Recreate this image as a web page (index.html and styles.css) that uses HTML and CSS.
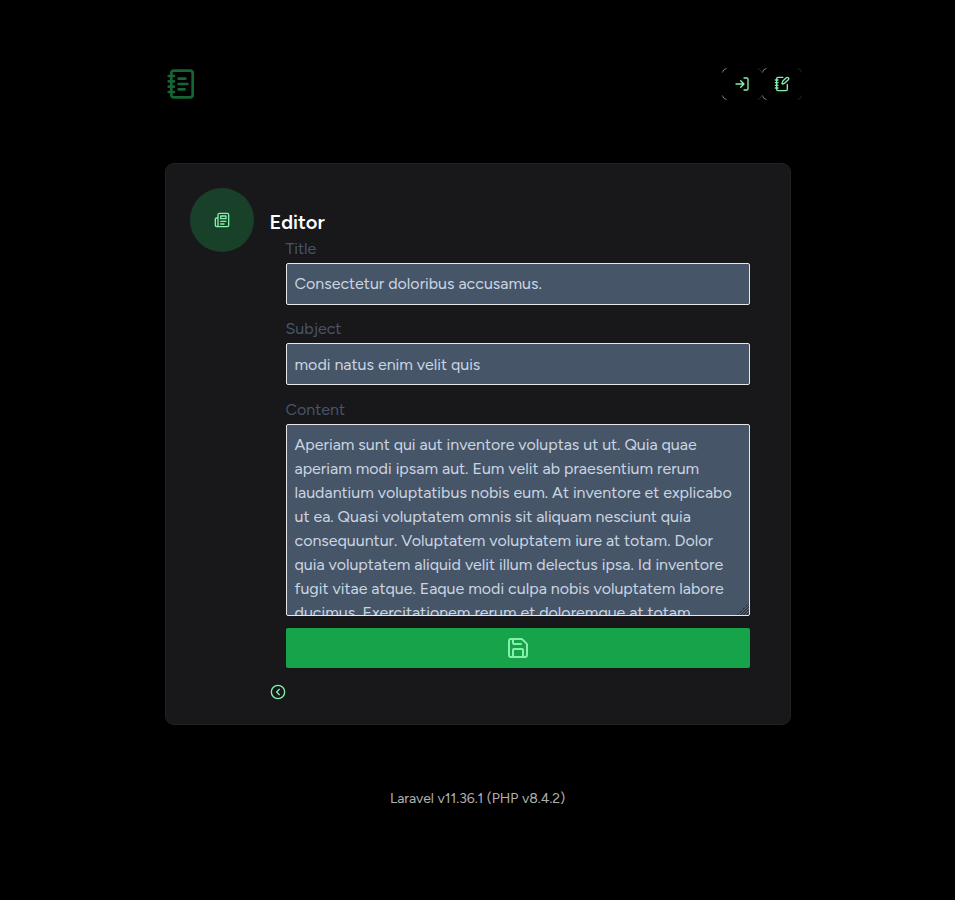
FILE: index.html
```html
<!DOCTYPE html>
<html lang="en">
<head>
<meta charset="utf-8">
<title>Editor</title>
<link rel="stylesheet" href="styles.css">
</head>
<body>
<div class="page">
  <header class="header">
    <svg class="logo icon" viewBox="0 0 24 24"><path d="M2 6h4M2 10h4M2 14h4M2 18h4"/><rect width="16" height="20" x="4" y="2" rx="2"/><path d="M9.5 8h5M9.5 12H16M9.5 16H14"/></svg>
    <nav class="nav">
      <a class="nav-link">
        <svg class="corners" viewBox="0 0 40 32"><path d="M.5 4.5Q1 1 4.5.5M.5 27.5Q1 31 4.5 31.5"/><path class="dim" d="M35.5.5Q39 1 39.5 4.5M35.5 31.5Q39 31 39.5 27.5"/></svg>
        <svg class="icon small" viewBox="0 0 24 24"><path d="M15 3h4a2 2 0 0 1 2 2v14a2 2 0 0 1-2 2h-4"/><path d="m10 17 5-5-5-5M15 12H3"/></svg>
      </a>
      <a class="nav-link">
        <svg class="corners" viewBox="0 0 40 32"><path d="M.5 4.5Q1 1 4.5.5M.5 27.5Q1 31 4.5 31.5"/><path class="dim" d="M35.5.5Q39 1 39.5 4.5M35.5 31.5Q39 31 39.5 27.5"/></svg>
        <svg class="icon small" viewBox="0 0 24 24"><path d="M13.4 2H6a2 2 0 0 0-2 2v16a2 2 0 0 0 2 2h12a2 2 0 0 0 2-2v-7.4M2 6h4M2 10h4M2 14h4M2 18h4"/><path d="M21.378 5.626a1 1 0 1 0-3.004-3.004l-5.01 5.012a2 2 0 0 0-.506.854l-.837 2.87a.5.5 0 0 0 .62.62l2.87-.837a2 2 0 0 0 .854-.506z"/></svg>
      </a>
    </nav>
  </header>
  <main class="card">
    <div class="badge">
      <svg class="icon small" viewBox="0 0 24 24"><path d="M4 22h16a2 2 0 0 0 2-2V4a2 2 0 0 0-2-2H8a2 2 0 0 0-2 2v16a2 2 0 0 1-2 2Zm0 0a2 2 0 0 1-2-2v-9c0-1.100.9-2 2-2h2"/><path d="M18 14h-8M15 18h-5M10 6h8v4h-8V6Z"/></svg>
    </div>
    <div class="body">
      <h2 class="title">Editor</h2>
      <form class="form">
        <label class="label" for="title">Title</label>
        <input class="field field-title" id="title" value="Consectetur doloribus accusamus.">
        <label class="label" for="subject">Subject</label>
        <input class="field field-subject" id="subject" value="modi natus enim velit quis">
        <label class="label" for="content">Content</label>
        <textarea class="field area" id="content">Aperiam sunt qui aut inventore voluptas ut ut. Quia quae
aperiam modi ipsam aut. Eum velit ab praesentium rerum
laudantium voluptatibus nobis eum. At inventore et explicabo
ut ea. Quasi voluptatem omnis sit aliquam nesciunt quia
consequuntur. Voluptatem voluptatem iure at totam. Dolor
quia voluptatem aliquid velit illum delectus ipsa. Id inventore
fugit vitae atque. Eaque modi culpa nobis voluptatem labore
ducimus. Exercitationem rerum et doloremque at totam.</textarea>
        <button class="save" type="button" aria-label="Save"><svg class="icon" viewBox="0 0 24 24"><path d="M15.2 3a2 2 0 0 1 1.400.6l3.800 3.800a2 2 0 0 1 .6 1.400V19a2 2 0 0 1-2 2H5a2 2 0 0 1-2-2V5a2 2 0 0 1 2-2z"/><path d="M17 21v-7a1 1 0 0 0-1-1H8a1 1 0 0 0-1 1v7M7 3v4a1 1 0 0 0 1 1h7"/></svg></button>
      </form>
      <a class="back"><svg class="icon small" viewBox="0 0 24 24"><circle cx="12" cy="12" r="10"/><path d="m14 16-4-4 4-4"/></svg></a>
    </div>
  </main>
  <footer class="footer">Laravel v11.36.1 (PHP v8.4.2)</footer>
</div>
</body>
</html>
```
FILE: styles.css
```css
* { box-sizing: border-box; }
body { margin: 0; background: #000; font: 16px/24px Figtree, Lato, sans-serif; -webkit-font-smoothing: antialiased; }
.page { width: 626px; margin: 0 auto; height: 900px; }
.icon { display: block; width: 24px; height: 24px; fill: none; stroke: currentColor; stroke-width: 2; stroke-linecap: round; stroke-linejoin: round; color: #86efac; }
.small { width: 16px; height: 16px; }
.header { display: flex; justify-content: space-between; padding: 68px 0 0 1px; height: 163px; margin-right: -11px; }
.logo { width: 32px; height: 32px; color: #166534; }
.nav { display: flex; }
.nav-link { position: relative; display: flex; align-items: center; justify-content: center; width: 40px; height: 32px; }
.corners { position: absolute; inset: 0; width: 40px; height: 32px; fill: none; stroke: #999; stroke-width: .8; }
.corners .dim { stroke: #292929; }
.card { display: flex; gap: 16px; height: 562px; padding: 24px; border: 1px solid #222224; border-radius: 9px; background: #18181b; }
.badge { display: flex; flex: none; align-items: center; justify-content: center; width: 64px; height: 64px; border-radius: 50%; background: #194029; }
.body { flex: 1; padding-top: 20px; }
.title { margin: 0; font-size: 20px; line-height: 28px; font-weight: 600; color: #fff; }
.form { display: flex; flex-direction: column; padding: 1px 16px 0; }
.label { height: 24px; margin-bottom: 2px; color: #475569; }
.field { width: 100%; height: 42px; margin: 0 0 12px; padding: 8px; border: 1px solid #e5e7eb; border-radius: 2px; background: #475569; color: #cbd5e1; font: inherit; outline: 0; }
.field-title { padding: 7px 8px 9px; }
.field-subject { margin-bottom: 13px; }
.area { height: 192px; overflow: hidden; resize: vertical; white-space: pre; }
.area::-webkit-resizer { background: repeating-linear-gradient(135deg, #2d3541 0 .7px, #66717f .7px 1.414px) right 1px bottom 1px / 10px 10px no-repeat; clip-path: polygon(100% 22%, 100% 100%, 22% 100%); background: linear-gradient(135deg, transparent 50%, #2d3541 50% 56%, #66717f 56% 62%, #2d3541 62% 68%, #66717f 68% 74%, #2d3541 74% 80%, #66717f 80% 86%, #2d3541 86% 92%, #66717f 92%) right bottom / 12px 12px no-repeat; }
.save { display: flex; align-items: center; justify-content: center; height: 40px; padding: 0; border: 0; border-radius: 2px; background: #16a34a; }
.back { display: block; width: 16px; margin-top: 16px; }
.footer { padding-top: 64px; font-size: 14px; line-height: 20px; text-align: center; color: rgba(255,255,255,.7); }
```
